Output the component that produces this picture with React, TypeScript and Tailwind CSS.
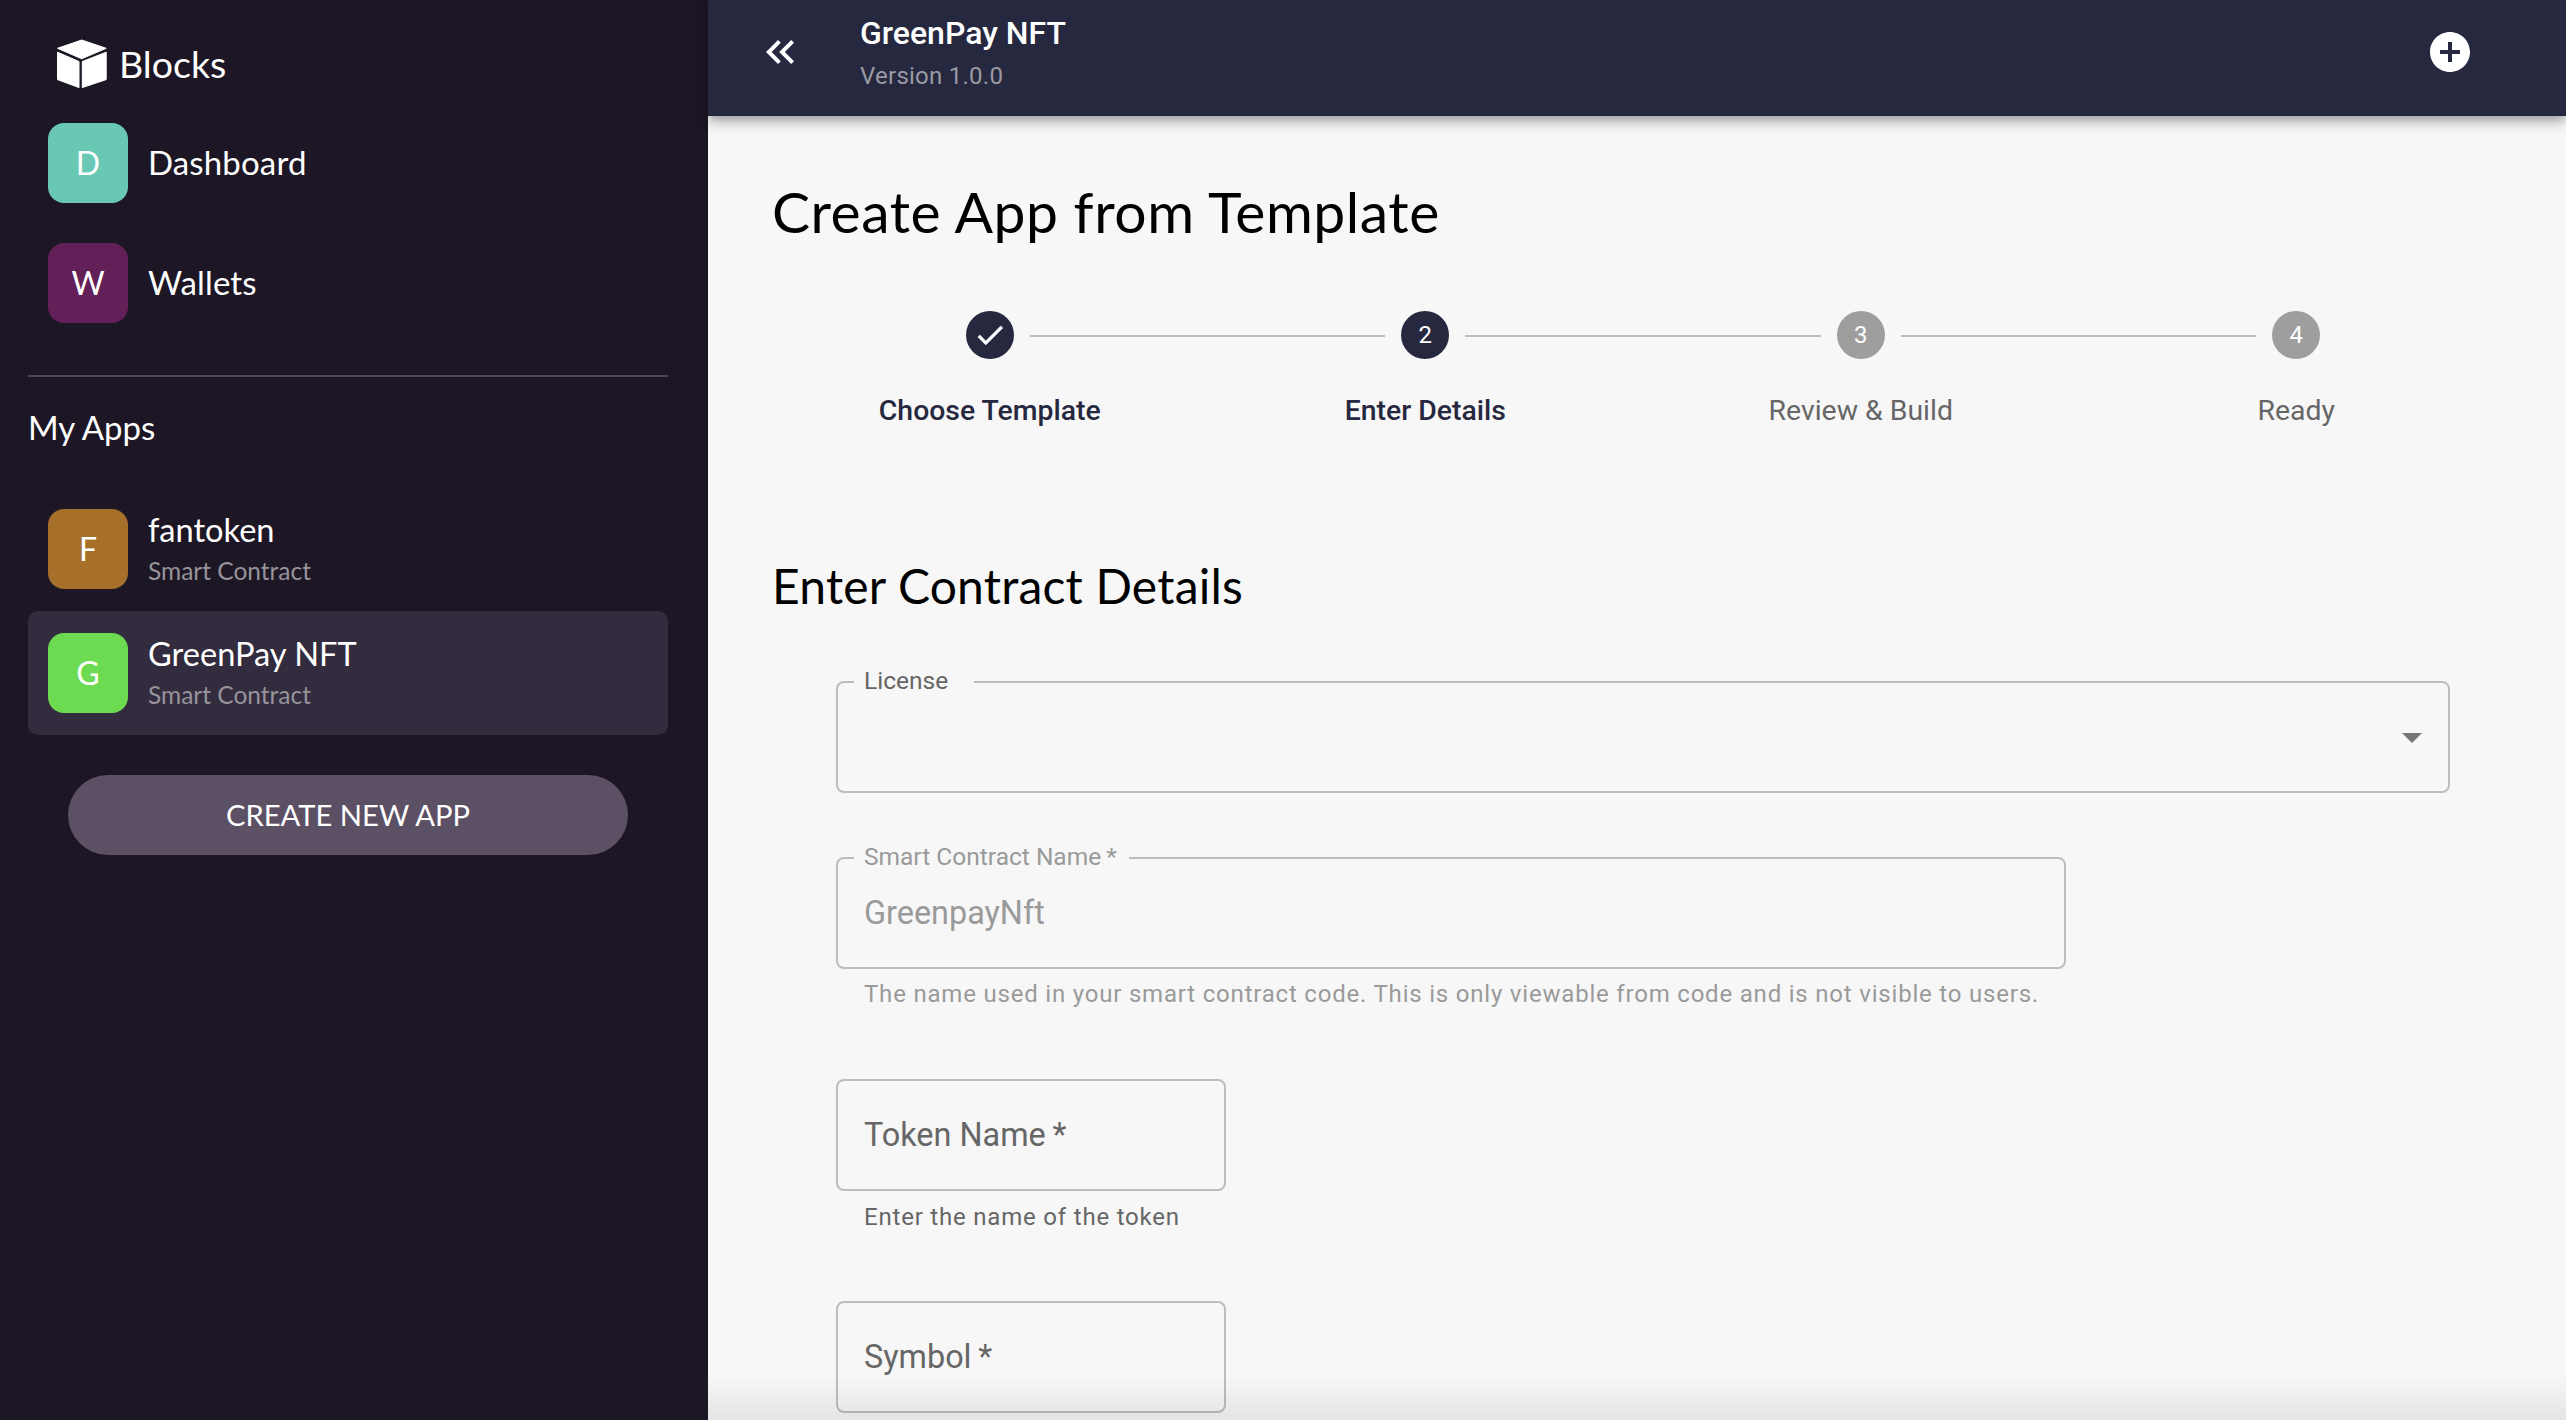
import { ReactNode } from 'react';

const sidebarFont = "font-['Lato',sans-serif]";

function Avatar({ letter, color }: { letter: string; color: string }) {
  return (
    <div className={`flex h-[80px] w-[80px] shrink-0 items-center justify-center rounded-[16px] text-[32px] text-white ${color}`}>
      {letter}
    </div>
  );
}

function NavItem({ letter, color, label }: { letter: string; color: string; label: string }) {
  return (
    <div className="flex items-center gap-[20px] py-[20px] pl-[20px]">
      <Avatar letter={letter} color={color} />
      <span className="-mt-[2px] text-[33px] leading-[40px] tracking-[0.15px] text-white">{label}</span>
    </div>
  );
}

function AppItem({ letter, color, name, active }: { letter: string; color: string; name: string; active?: boolean }) {
  return (
    <div className={`flex items-center gap-[20px] rounded-[10px] py-[22px] pl-[20px] ${active ? 'bg-[#332c3e]' : ''}`}>
      <Avatar letter={letter} color={color} />
      <div className="flex h-[80px] flex-col pt-[1px]">
        <span className="h-[40px] text-[32.6px] leading-[40px] text-white">{name}</span>
        <span className="mt-[3px] h-[36px] text-[24.5px] leading-[36px] text-[#96939b]">Smart Contract</span>
      </div>
    </div>
  );
}

function Step({ label, done, number, active, first, last }: { label: string; done?: boolean; number?: number; active?: boolean; first?: boolean; last?: boolean }) {
  return (
    <div className="flex flex-col">
      <div className="flex items-center gap-4">
        <div className={`h-[2px] flex-1 translate-y-px ${first ? '' : 'bg-[#bdbdbd]'}`} />
        <div className={`flex h-[48px] w-[48px] items-center justify-center rounded-full text-[24px] text-white ${active || done ? 'bg-[#262840]' : 'bg-[#9e9e9e]'}`}>
          {done ? (
            <svg width="34" height="34" viewBox="0 0 24 24" fill="currentColor" stroke="currentColor" strokeWidth="0.4">
              <path d="M9 16.17 4.83 12l-1.42 1.41L9 19 21 7l-1.41-1.41z" />
            </svg>
          ) : (
            number
          )}
        </div>
        <div className={`h-[2px] flex-1 translate-y-px ${last ? '' : 'bg-[#bdbdbd]'}`} />
      </div>
      <div className={`mt-[36px] text-center text-[28.4px] leading-[32px] ${active || done ? 'font-medium text-[#262840]' : 'text-[#666666]'}`}>
        {label}
      </div>
    </div>
  );
}

function Field({ className, children }: { className: string; children?: ReactNode }) {
  return (
    <div className={`relative flex h-[112px] items-center rounded-[8px] border-2 border-[#bdbdbd] px-[26px] text-[32.4px] ${className}`}>
      {children}
    </div>
  );
}

function Helper({ className, children }: { className: string; children: ReactNode }) {
  return <div className={`ml-[28px] text-[24px] leading-[32px] tracking-[0.8px] ${className}`}>{children}</div>;
}

export default function App() {
  return (
    <div className="flex h-screen w-full overflow-hidden bg-[#f7f7f7] font-['Roboto',sans-serif]">
      <aside className={`flex w-[708px] shrink-0 flex-col bg-[#1d1725] pl-[28px] pr-[40px] pt-[40px] ${sidebarFont}`}>
        <div className="flex h-[48px] items-center gap-[12px] pl-[29px]">
          {/* cube logo */}
          <svg width="50" height="50" viewBox="0 -1 50 50" fill="white" stroke="white" strokeWidth="1" strokeLinejoin="round">
            <path d="M24.7 0 49.2 8.3 24.7 18.8 0.5 8.3z" />
            <path d="M0.5 12.2 22 21.5V47.6L0.5 39.6z" />
            <path d="M25.3 21.5 49.2 12.2V39.6L25.3 47.6z" />
          </svg>
          <span className="text-[37.5px] leading-[48px] text-white">Blocks</span>
        </div>

        <div className="mt-[15px]">
          <NavItem letter="D" color="bg-[#68c8b4]" label="Dashboard" />
          <NavItem letter="W" color="bg-[#632058]" label="Wallets" />
        </div>

        <div className="mt-[32px] h-[2px] bg-[#4d4856]" />
        <div className="mt-[30px] text-[33px] leading-[40px] text-white">My Apps</div>

        <div className="mt-[40px]">
          <AppItem letter="F" color="bg-[#a66f2a]" name="fantoken" />
          <AppItem letter="G" color="bg-[#6cdb52]" name="GreenPay NFT" active />
        </div>

        <button className="mx-[40px] mt-[40px] h-[80px] rounded-full bg-[#5c5065] text-[29.2px] text-white">
          CREATE NEW APP
        </button>
      </aside>

      <div className="relative flex min-w-0 flex-1 flex-col">
        <header className="z-10 flex h-[116px] shrink-0 items-center bg-[#262840] pb-[12px] pl-[48px] pr-[92px] shadow-[0_4px_8px_-2px_rgba(0,0,0,0.2),0_8px_10px_0_rgba(0,0,0,0.14),0_2px_20px_0_rgba(0,0,0,0.12)]">
          <svg width="48" height="48" viewBox="0 0 24 24" fill="white">
            <path d="M17.59 18 19 16.59 14.42 12 19 7.41 17.59 6l-6 6z" />
            <path d="M11 18l1.41-1.41L7.83 12l4.58-4.59L11 6l-6 6z" />
          </svg>
          <div className="ml-[56px] flex-1">
            <div className="text-[32px] font-medium leading-[40px] text-white">GreenPay NFT</div>
            <div className="mt-[7px] text-[24px] leading-[32px] tracking-[0.25px] text-[#9a9aa3]">Version 1.0.0</div>
          </div>
          <svg width="48" height="48" viewBox="0 0 24 24" fill="white">
            <path d="M12 2C6.48 2 2 6.48 2 12s4.48 10 10 10 10-4.48 10-10S17.52 2 12 2zm5 11h-4v4h-2v-4H7v-2h4V7h2v4h4v2z" />
          </svg>
        </header>

        <main className="flex-1 overflow-hidden pl-[64px] pr-[52px] pt-[59px]">
          <h1 className={`text-[57px] leading-[72px] tracking-[0.55px] text-black ${sidebarFont}`}>Create App from Template</h1>

          <div className="mt-[64px] grid grid-cols-4">
            <Step label="Choose Template" done first />
            <Step label="Enter Details" number={2} active />
            <Step label="Review & Build" number={3} />
            <Step label="Ready" number={4} last />
          </div>

          <h2 className={`mt-[129px] text-[48px] leading-[60px] tracking-[0.2px] text-black ${sidebarFont}`}>Enter Contract Details</h2>

          <div className="ml-[64px] mt-[65px] flex flex-col">
            <Field className="w-[1614px]">
              <label className="absolute left-[16px] top-[-18px] bg-[#f7f7f7] pl-[10px] pr-[26px] text-[24.5px] leading-[32px] text-[#666666]">License</label>
              <svg className="absolute right-[12px] top-[30px]" width="48" height="48" viewBox="0 0 24 24" fill="#757575">
                <path d="M7 10l5 5 5-5z" />
              </svg>
            </Field>

            <Field className="mt-[64px] w-[1230px] text-[#9a9a9a]">
              <label className="absolute left-[16px] top-[-18px] bg-[#f7f7f7] pl-[10px] pr-[12px] text-[24.5px] leading-[32px]">Smart Contract Name{'\u2009'}*</label>
              GreenpayNft
            </Field>
            <Helper className="mt-[9px] text-[#9a9a9a]">
              The name used in your smart contract code. This is only viewable from code and is not visible to users.
            </Helper>

            <Field className="mt-[69px] w-[390px] text-[#666666]">Token Name{'\u2009'}*</Field>
            <Helper className="mt-[10px] text-[#666666]">Enter the name of the token</Helper>

            <Field className="mt-[68px] w-[390px] text-[#666666]">Symbol{'\u2009'}*</Field>
          </div>
        </main>

        <div className="pointer-events-none absolute inset-x-0 bottom-0 h-[44px] bg-linear-to-t from-[#00000014] to-transparent" />
      </div>
    </div>
  );
}
